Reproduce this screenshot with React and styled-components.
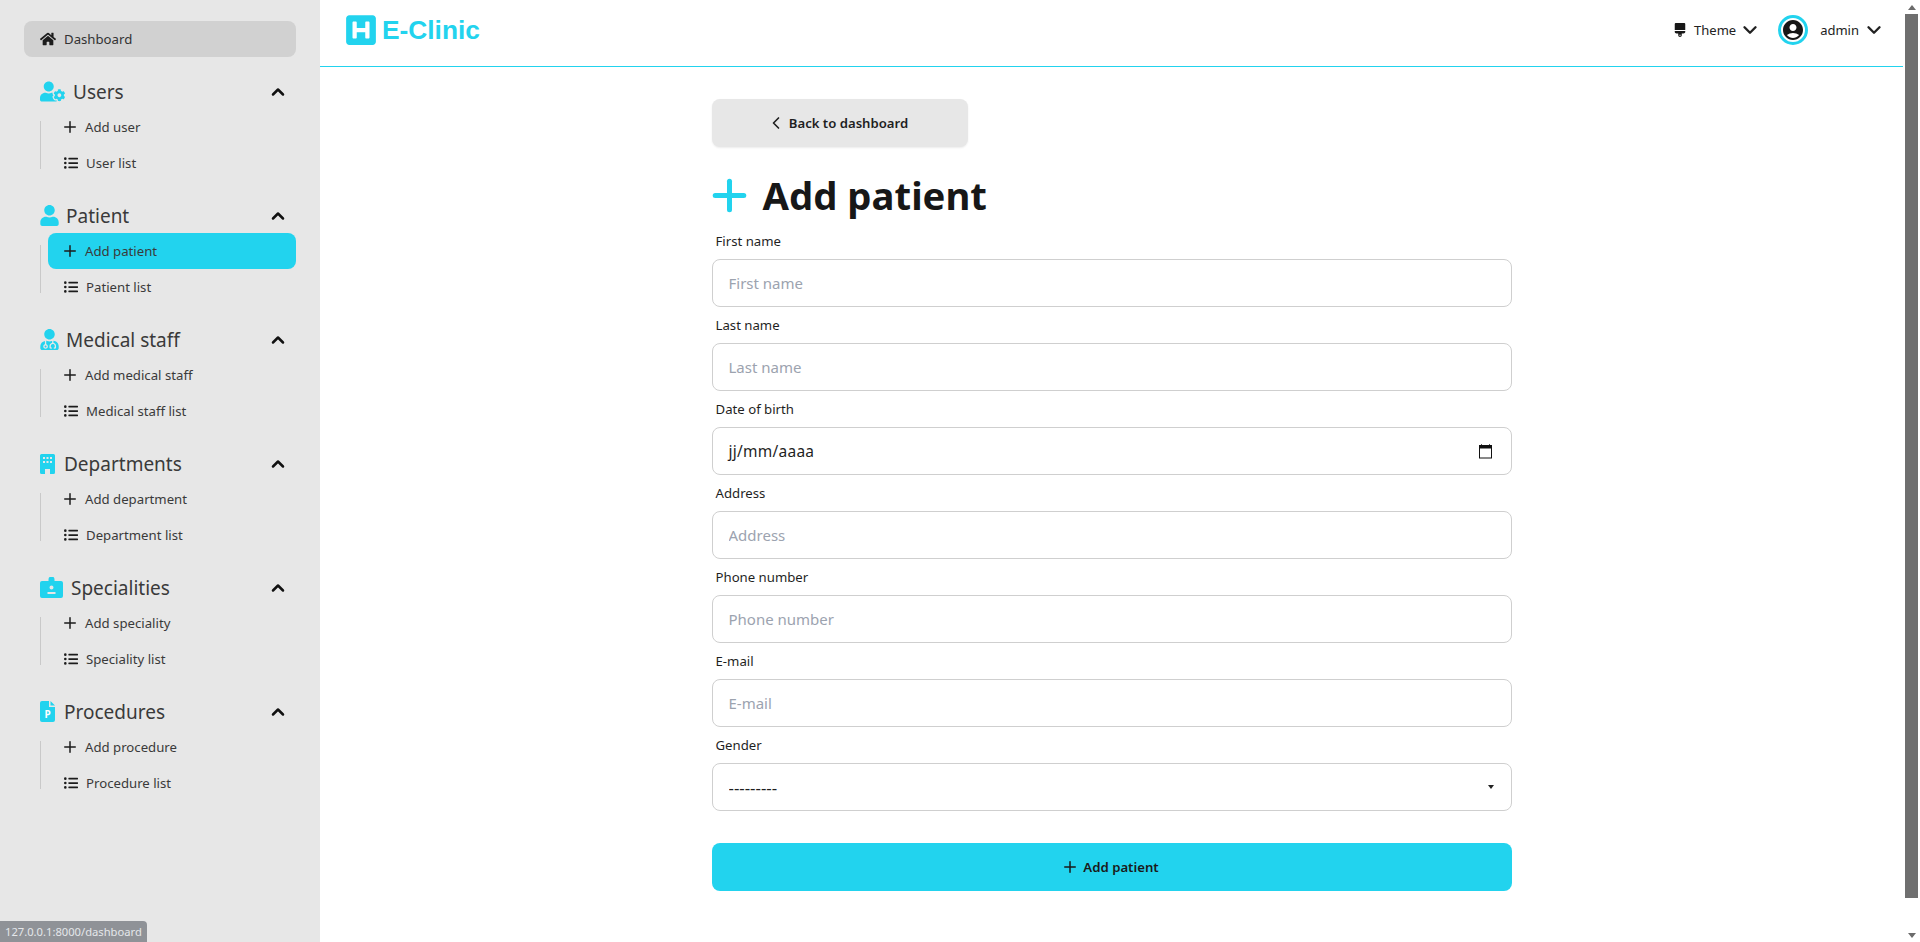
import React from 'react'
import styled, { createGlobalStyle } from 'styled-components'
import { ChevronDown, ChevronLeft, ChevronUp, Plus } from 'lucide-react'
import { FaBrush, FaHSquare, FaHome, FaListUl, FaUser, FaUserCog, FaUserMd } from 'react-icons/fa'
import { MdAccountCircle } from 'react-icons/md'

const cyan = '#22d3ee'

const GlobalStyle = createGlobalStyle`
  html, body {
    margin: 0;
    height: 100%;
    overflow: hidden;
    background: #fff;
    font-family: "Noto Sans", "Open Sans", sans-serif;
    color: #1f1f1f;
  }
  * {
    box-sizing: border-box;
  }
`

const Page = styled.div`
  display: flex;
  height: 942px;
  position: relative;
`

const Sidebar = styled.aside`
  width: 320px;
  flex-shrink: 0;
  background: #e7e7e7;
  padding: 21px 24px 0;
  display: flex;
  flex-direction: column;
  gap: 17px;
`

const DashboardLink = styled.a`
  display: flex;
  align-items: center;
  gap: 8px;
  height: 36px;
  padding-left: 16px;
  border-radius: 8px;
  background: #d1d1d1;
  font-size: 13.2px;
  color: #333;
`

const SectionTitle = styled.div`
  display: flex;
  align-items: center;
  height: 35px;
  padding: 0 8px 0 16px;
  font-size: 19px;
  color: #3a3a3a;
  > svg:first-child {
    color: ${cyan};
    flex-shrink: 0;
    margin-left: ${(p) => p.$shift || 0}px;
  }
  span {
    margin-left: ${(p) => p.$gap}px;
    flex: 1;
  }
`

const SubList = styled.ul`
  position: relative;
  list-style: none;
  margin: 0 0 0 24px;
  padding: 0;
  &::before {
    content: '';
    position: absolute;
    left: -8px;
    top: 12px;
    bottom: 12px;
    width: 1px;
    background: #c9c9c9;
  }
`

const SubItem = styled.li`
  display: flex;
  align-items: center;
  height: 36px;
  padding-left: ${(p) => p.$pad}px;
  gap: ${(p) => p.$gap}px;
  border-radius: 8px;
  font-size: 13.2px;
  color: #3a3a3a;
  background: ${(p) => (p.$active ? cyan : 'transparent')};
  svg {
    color: #1c1c1c;
    flex-shrink: 0;
  }
`

const Main = styled.main`
  flex: 1;
  min-width: 0;
`

const Header = styled.header`
  display: flex;
  align-items: center;
  height: 67px;
  padding: 0 18px 6px 24px;
  border-bottom: 1px solid ${cyan};
`

const Brand = styled.div`
  display: flex;
  align-items: center;
  gap: 4px;
  flex: 1;
  color: ${cyan};
  font-family: "Liberation Sans", Arial, sans-serif;
  font-weight: 700;
  font-size: 26.3px;
`

const HeaderMenu = styled.div`
  display: flex;
  align-items: center;
  font-size: 13px;
  color: #222;
  margin-left: ${(p) => p.$left || 0}px;
  gap: ${(p) => p.$gap}px;
`

const Caret = styled(ChevronDown)`
  margin-left: ${(p) => p.$back}px;
  color: #222;
`

const Avatar = styled.div`
  display: flex;
  align-items: center;
  justify-content: center;
  width: 30px;
  height: 30px;
  border: 3px solid ${cyan};
  border-radius: 50%;
  color: #171717;
`

const Form = styled.form`
  width: 800px;
  margin: 0 auto;
  padding-top: 32px;
`

const BackButton = styled.button`
  display: flex;
  align-items: center;
  justify-content: center;
  gap: 3px;
  width: 256px;
  height: 48px;
  padding: 0 5px 0 0;
  border: 0;
  border-radius: 8px;
  background: #e7e7e7;
  box-shadow: 0 1px 2px rgba(0, 0, 0, 0.08);
  font: 600 13.15px "Noto Sans", sans-serif;
  color: #1f1f1f;
`

const Title = styled.h1`
  display: flex;
  align-items: center;
  gap: 9px;
  margin: 28px 0 8px -7px;
  height: 40px;
  font-size: 38.3px;
  font-weight: 700;
  color: #171717;
  svg {
    color: ${cyan};
  }
`

const Label = styled.label`
  display: block;
  height: 36px;
  line-height: 36px;
  padding-left: 4px;
  font-size: 13.2px;
  color: #1f1f1f;
`

const fieldBox = `
  width: 100%;
  height: 48px;
  border: 1px solid #cfcfcf;
  border-radius: 8px;
  background: #fff;
  padding: 0 16px;
  font: 400 15px "Noto Sans", sans-serif;
`

const Input = styled.input`
  ${fieldBox}
  display: block;
  outline: none;
  &::placeholder {
    color: #9ca3af;
    opacity: 1;
  }
`

const DateField = styled.div`
  ${fieldBox}
  display: flex;
  align-items: center;
  justify-content: space-between;
  color: #1f1f1f;
  padding-right: 19px;
  font-size: 15.5px;
  letter-spacing: 0.25px;
`

const SelectWrap = styled.div`
  position: relative;
  &::after {
    content: '';
    position: absolute;
    right: 18px;
    top: 22px;
    border-left: 3px solid transparent;
    border-right: 3px solid transparent;
    border-top: 4px solid #222;
  }
`

const Select = styled.select`
  ${fieldBox}
  display: block;
  appearance: none;
  outline: none;
  color: #1f1f1f;
  font-size: 16.8px;
`

const SubmitButton = styled.button`
  display: flex;
  align-items: center;
  justify-content: center;
  gap: 4px;
  width: 100%;
  height: 48px;
  margin-top: 32px;
  padding: 0 3px 0 0;
  border: 0;
  border-radius: 8px;
  background: ${cyan};
  font: 600 13.2px "Noto Sans", sans-serif;
  color: #1a1a1a;
`

const Scrollbar = styled.div`
  width: 17px;
  flex-shrink: 0;
  display: flex;
  flex-direction: column;
  align-items: center;
  background: #fff;
`

const ScrollArrow = styled.div`
  height: 14px;
  margin-top: ${(p) => (p.$down ? 'auto' : 0)};
  display: flex;
  align-items: center;
  justify-content: center;
  &::after {
    content: '';
    border-left: 4.5px solid transparent;
    border-right: 4.5px solid transparent;
    ${(p) => (p.$down ? 'border-top' : 'border-bottom')}: 5px solid #6b6b6b;
  }
`

const ScrollThumb = styled.div`
  width: 13px;
  height: 884px;
  background: #6f6f6f;
`

const StatusBubble = styled.div`
  position: absolute;
  left: 0;
  bottom: 0;
  height: 21px;
  line-height: 21px;
  padding: 0 5px;
  border-top-right-radius: 4px;
  background: #8f9297;
  color: #e4e7ea;
  font-size: 11.2px;
`

const BuildingIcon = () => (
  <svg width="15" height="20" viewBox="0 0 15 20">
    <path
      fill="currentColor"
      fillRule="evenodd"
      d="M1.5 0h12A1.5 1.5 0 0 1 15 1.5v17a1.5 1.5 0 0 1-1.5 1.5H10v-5H5v5H1.5A1.5 1.5 0 0 1 0 18.500v-17A1.500 1.500 0 0 1 1.500 0ZM3 3v2h2V3H3Zm3.500 0v2h2V3h-2ZM10 3v2h2V3h-2ZM3 7v2h2V7H3Zm3.500 0v2h2V7h-2ZM10 7v2h2V7h-2Z"
    />
  </svg>
)

const BadgeIcon = () => (
  <svg width="23" height="21" viewBox="0 0 23 21">
    <path
      fill="currentColor"
      fillRule="evenodd"
      d="M2 4h6.500V2.500a3 3 0 0 1 6 0V4H21a2 2 0 0 1 2 2v13a2 2 0 0 1-2 2H2a2 2 0 0 1-2-2V6a2 2 0 0 1 2-2Zm9.500 4.500a2 2 0 1 0 0 4 2 2 0 0 0 0-4ZM7.500 15v2h8v-2h-8Z"
    />
  </svg>
)

const ProcedureIcon = () => (
  <svg width="15" height="21" viewBox="0 0 15 21">
    <path fill="currentColor" d="M2 0h7v6h6v13a2 2 0 0 1-2 2H2a2 2 0 0 1-2-2V2a2 2 0 0 1 2-2Zm8.500 0L15 4.500h-4.500V0Z" />
    <text x="7.500" y="17" textAnchor="middle" fill="#fff" fontSize="10" fontWeight="700" fontFamily="Noto Sans, sans-serif">
      P
    </text>
  </svg>
)

const CalendarIcon = () => (
  <svg width="13" height="15" viewBox="0 0 13 15">
    <path d="M2.500 0v2M10.500 0v2" stroke="#555" strokeWidth="1" />
    <rect x="0.500" y="1.500" width="12" height="12.500" fill="#fff" stroke="#111" />
    <rect x="0" y="1" width="13" height="3.500" fill="#111" />
  </svg>
)

const sections = [
  { title: 'Users', icon: <FaUserCog size={25} />, gap: 8, add: 'Add user', list: 'User list' },
  { title: 'Patient', icon: <FaUser size={21} />, shift: -1, gap: 6, add: 'Add patient', list: 'Patient list', active: true },
  { title: 'Medical staff', icon: <FaUserMd size={21} />, shift: -1, gap: 6, add: 'Add medical staff', list: 'Medical staff list' },
  { title: 'Departments', icon: <BuildingIcon />, gap: 9, add: 'Add department', list: 'Department list' },
  { title: 'Specialities', icon: <BadgeIcon />, gap: 8, add: 'Add speciality', list: 'Speciality list' },
  { title: 'Procedures', icon: <ProcedureIcon />, gap: 9, add: 'Add procedure', list: 'Procedure list' },
]

const fields = [
  { label: 'First name', type: 'text' },
  { label: 'Last name', type: 'text' },
  { label: 'Date of birth', type: 'date' },
  { label: 'Address', type: 'text' },
  { label: 'Phone number', type: 'text' },
  { label: 'E-mail', type: 'text' },
]

const App = () => {
  return (
    <Page>
      <GlobalStyle />
      <Sidebar>
        <DashboardLink>
          <FaHome size={16} color="#1c1c1c" />
          Dashboard
        </DashboardLink>
        {sections.map((section) => (
          <div key={section.title}>
            <SectionTitle $gap={section.gap} $shift={section.shift}>
              {section.icon}
              <span>{section.title}</span>
              <ChevronUp size={20} strokeWidth={3} color="#111" />
            </SectionTitle>
            <SubList>
              <SubItem $active={section.active} $pad={13} $gap={6}>
                <Plus size={18} strokeWidth={2} />
                {section.add}
              </SubItem>
              <SubItem $pad={16} $gap={8}>
                <FaListUl size={14} />
                {section.list}
              </SubItem>
            </SubList>
          </div>
        ))}
      </Sidebar>
      <Main>
        <Header>
          <Brand>
            <FaHSquare size={34} />
            E-Clinic
          </Brand>
          <HeaderMenu $gap={7}>
            <FaBrush size={14} color="#171717" />
            Theme
            <Caret size={22} strokeWidth={2.6} $back={-4} />
          </HeaderMenu>
          <HeaderMenu $left={17} $gap={12}>
            <Avatar>
              <MdAccountCircle size={28} />
            </Avatar>
            admin
            <Caret size={22} strokeWidth={2.6} $back={-8} />
          </HeaderMenu>
        </Header>
        <Form>
          <BackButton type="button">
            <ChevronLeft size={20} strokeWidth={2} />
            Back to dashboard
          </BackButton>
          <Title>
            <Plus size={49} strokeWidth={2.45} />
            Add patient
          </Title>
          {fields.map((field) => (
            <div key={field.label}>
              <Label>{field.label}</Label>
              {field.type === 'date' ? (
                <DateField>
                  jj/mm/aaaa
                  <CalendarIcon />
                </DateField>
              ) : (
                <Input placeholder={field.label} />
              )}
            </div>
          ))}
          <Label>Gender</Label>
          <SelectWrap>
            <Select defaultValue="">
              <option value="">---------</option>
              <option value="m">Male</option>
              <option value="f">Female</option>
            </Select>
          </SelectWrap>
          <SubmitButton type="button">
            <Plus size={18} strokeWidth={2} />
            Add patient
          </SubmitButton>
        </Form>
      </Main>
      <Scrollbar>
        <ScrollArrow />
        <ScrollThumb />
        <ScrollArrow $down />
      </Scrollbar>
      <StatusBubble>127.0.0.1:8000/dashboard</StatusBubble>
    </Page>
  )
}

export default App
